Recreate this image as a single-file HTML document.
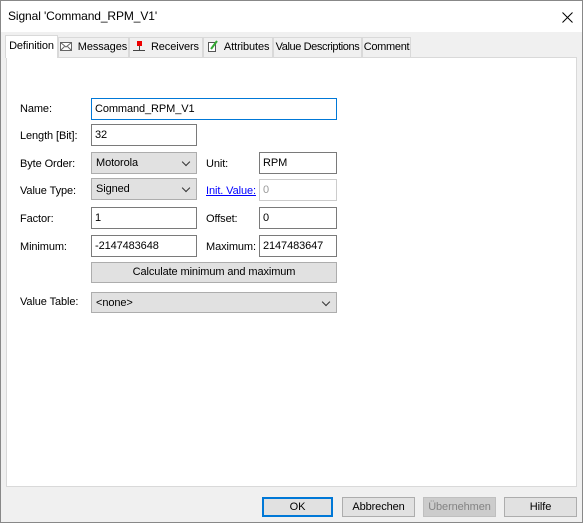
<!DOCTYPE html><html><head><style>
body{margin:0;width:583px;height:523px;background:#f0f0f0;font-family:"Liberation Sans",sans-serif;font-size:11px;color:#000;position:relative;overflow:hidden}
.a{position:absolute;box-sizing:border-box;white-space:nowrap;letter-spacing:-0.1px}
.in{background:#fff;border:1px solid #7a7a7a;padding:3px 3px 1px;line-height:15px}
.cb{background:#e1e1e1;border:1px solid #adadad;padding:3px 4px 1px;line-height:15px}
.cb:after{content:"";position:absolute;right:7px;top:6px;width:5px;height:5px;border-right:1px solid #333;border-bottom:1px solid #333;transform:rotate(45deg)}
.btn{background:#e1e1e1;border:1px solid #adadad;text-align:center;line-height:19px}
.tab{border:1px solid #d9d9d9;border-bottom:none;background:#f0f0f0;top:37px;height:20px;line-height:19px;text-align:center}
.l{line-height:14px}
</style></head><body>
<div class="a" style="left:0;top:0;width:583px;height:523px;border:1px solid #888"></div>
<div class="a" style="left:1px;top:1px;width:581px;height:31px;background:#fff"></div>
<div class="a l" style="left:8px;top:9px;font-size:12px">Signal 'Command_RPM_V1'</div>
<svg class="a" style="left:562px;top:12px" width="11" height="11"><path d="M0.5 0.5L10.5 10.5M10.5 0.5L0.5 10.5" stroke="#000" stroke-width="1"/></svg>
<div class="a" style="left:6px;top:57px;width:571px;height:430px;background:#fff;border:1px solid #d9d9d9"></div>
<div class="a tab" style="left:58px;width:71px"><svg width="12" height="9" style="vertical-align:-1px"><rect x="0.5" y="0.5" width="11" height="8" fill="#fff" stroke="#666"/><path d="M0.5 0.5L6 5L11.5 0.5M0.5 8.5L4.5 4.5M11.5 8.5L7.5 4.5" stroke="#666" fill="none"/></svg>&nbsp; Messages</div>
<div class="a tab" style="left:129px;width:74px"><svg width="12" height="10" style="vertical-align:-1px"><rect x="4" y="0" width="5" height="5" fill="#e00"/><path d="M6.5 5V9M0 9.5H12" stroke="#444"/></svg>&nbsp; Receivers</div>
<div class="a tab" style="left:203px;width:70px"><svg width="12" height="12" style="vertical-align:-2px"><rect x="1.5" y="2.5" width="7" height="9" fill="#fff" stroke="#555"/><path d="M4 9L10 1" stroke="#3a3" stroke-width="2"/></svg>&nbsp; Attributes</div>
<div class="a tab" style="left:273px;width:89px;letter-spacing:-0.4px">Value Descriptions</div>
<div class="a tab" style="left:362px;width:49px;letter-spacing:-0.3px">Comment</div>
<div class="a" style="left:5px;top:35px;width:53px;height:23px;background:#fff;border:1px solid #d9d9d9;border-bottom:none;text-align:center;line-height:21px">Definition</div>

<div class="a l" style="left:20px;top:102px">Name:</div>
<div class="a in" style="left:91px;top:98px;width:246px;height:22px;border-color:#0078d7">Command_RPM_V1</div>
<div class="a l" style="left:20px;top:129px">Length [Bit]:</div>
<div class="a in" style="left:91px;top:124px;width:106px;height:22px">32</div>
<div class="a l" style="left:20px;top:157px">Byte Order:</div>
<div class="a cb" style="left:91px;top:152px;width:106px;height:22px">Motorola</div>
<div class="a l" style="left:206px;top:157px">Unit:</div>
<div class="a in" style="left:259px;top:152px;width:78px;height:22px">RPM</div>
<div class="a l" style="left:20px;top:184px">Value Type:</div>
<div class="a cb" style="left:91px;top:178px;width:106px;height:22px">Signed</div>
<div class="a l" style="left:206px;top:184px;color:#00f;text-decoration:underline">Init. Value:</div>
<div class="a in" style="left:259px;top:179px;width:78px;height:22px;border-color:#ccc;color:#999">0</div>
<div class="a l" style="left:20px;top:212px">Factor:</div>
<div class="a in" style="left:91px;top:207px;width:106px;height:22px">1</div>
<div class="a l" style="left:206px;top:212px">Offset:</div>
<div class="a in" style="left:259px;top:207px;width:78px;height:22px">0</div>
<div class="a l" style="left:20px;top:240px">Minimum:</div>
<div class="a in" style="left:91px;top:235px;width:106px;height:22px">-2147483648</div>
<div class="a l" style="left:206px;top:240px">Maximum:</div>
<div class="a in" style="left:259px;top:235px;width:78px;height:22px">2147483647</div>
<div class="a btn" style="left:91px;top:262px;width:246px;height:21px">Calculate minimum and maximum</div>
<div class="a l" style="left:20px;top:295px">Value Table:</div>
<div class="a cb" style="left:91px;top:292px;width:246px;height:21px">&lt;none&gt;</div>

<div class="a btn" style="left:262px;top:497px;width:71px;height:20px;border:2px solid #0078d7;line-height:16px">OK</div>
<div class="a btn" style="left:342px;top:497px;width:73px;height:20px">Abbrechen</div>
<div class="a btn" style="left:423px;top:497px;width:73px;height:20px;background:#ccc;border-color:#bfbfbf;color:#838383">Übernehmen</div>
<div class="a btn" style="left:504px;top:497px;width:73px;height:20px">Hilfe</div>
</body></html>
